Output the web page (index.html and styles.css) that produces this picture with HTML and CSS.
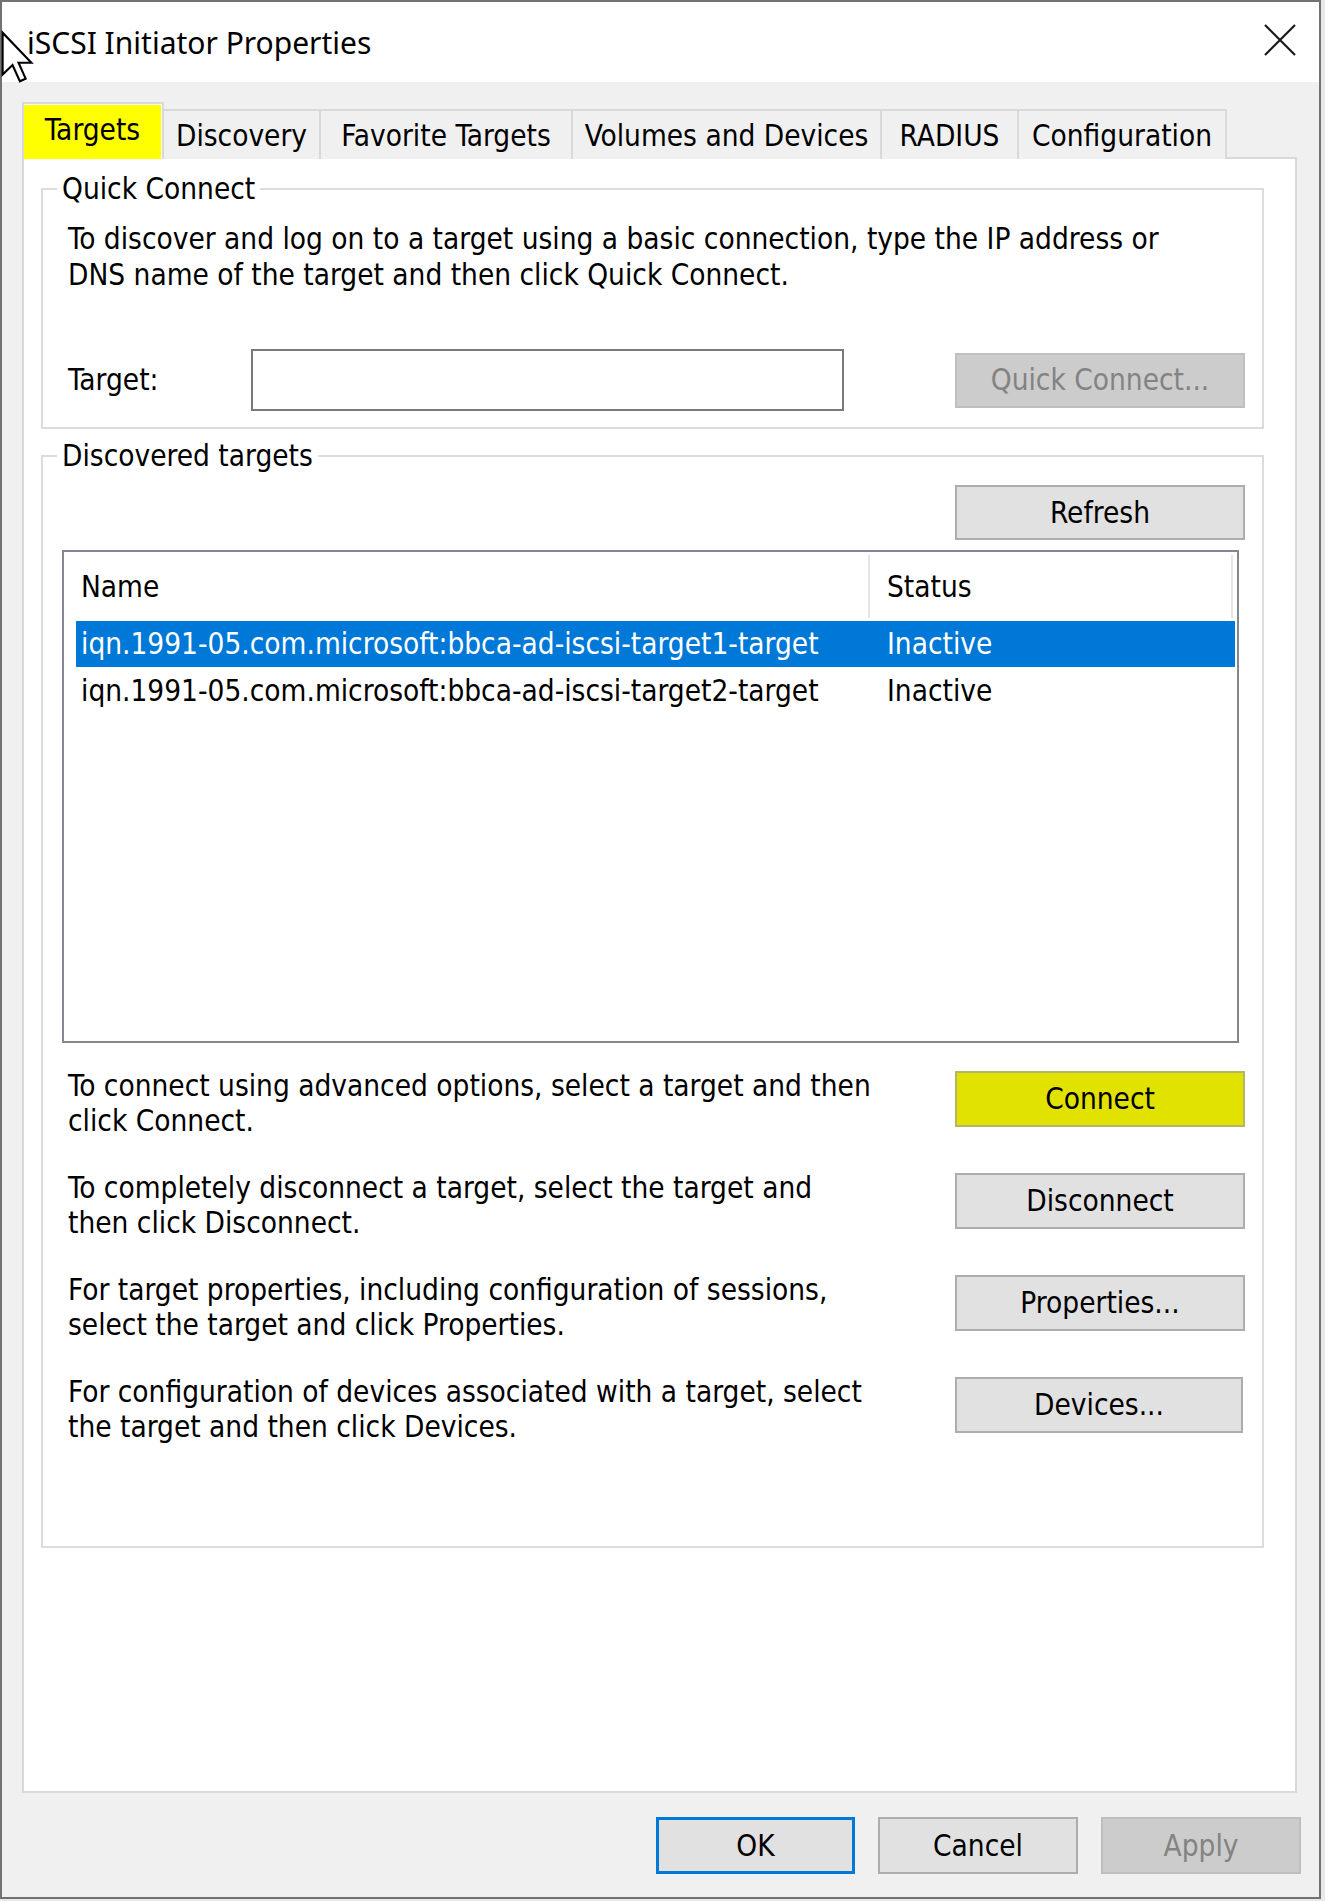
FILE: index.html
```html
<!DOCTYPE html>
<html lang="en">
<head>
    <meta charset="UTF-8">
    <meta name="viewport" content="width=device-width, initial-scale=1.0">
    <title>iSCSI Initiator Properties</title>
    <link rel="stylesheet" href="styles.css">
</head>
<body>
    <div class="window">
        <div class="titlebar">
            <span class="title">iSCSI Initiator Properties</span>
            <button type="button" class="close-btn" aria-label="Close">
                <svg width="32" height="32" viewBox="0 0 32 32">
                    <path d="M1 1 L31 31 M31 1 L1 31" stroke="#1a1a1a" stroke-width="2.2" fill="none"/>
                </svg>
            </button>
        </div>

        <div class="dialog">
            <div class="tabs">
                <div class="tab active"><span class="mark">Targets</span></div>
                <div class="tab tab-discovery">Discovery</div>
                <div class="tab tab-favorite">Favorite Targets</div>
                <div class="tab tab-volumes">Volumes and Devices</div>
                <div class="tab tab-radius">RADIUS</div>
                <div class="tab tab-config">Configuration</div>
            </div>

            <div class="tab-panel">
                <fieldset class="group group-quick">
                    <legend>Quick Connect</legend>
                    <p class="note">To discover and log on to a target using a basic connection, type the IP address or<br>DNS name of the target and then click Quick Connect.</p>
                    <div class="target-row">
                        <label class="target-label" for="target">Target:</label>
                        <input type="text" id="target" class="target-input">
                        <button type="button" class="btn" disabled>Quick Connect...</button>
                    </div>
                </fieldset>

                <fieldset class="group group-discovered">
                    <legend>Discovered targets</legend>
                    <div class="refresh-row">
                        <button type="button" class="btn">Refresh</button>
                    </div>

                    <div class="list">
                        <div class="list-head">
                            <div class="col-name">Name</div>
                            <div class="col-status">Status</div>
                        </div>
                        <div class="list-row selected">
                            <div class="col-name">iqn.1991-05.com.microsoft:bbca-ad-iscsi-target1-target</div>
                            <div class="col-status">Inactive</div>
                        </div>
                        <div class="list-row">
                            <div class="col-name">iqn.1991-05.com.microsoft:bbca-ad-iscsi-target2-target</div>
                            <div class="col-status">Inactive</div>
                        </div>
                    </div>

                    <div class="actions">
                        <div class="action">
                            <p>To connect using advanced options, select a target and then<br>click Connect.</p>
                            <button type="button" class="btn btn-mark">Connect</button>
                        </div>
                        <div class="action">
                            <p>To completely disconnect a target, select the target and<br>then click Disconnect.</p>
                            <button type="button" class="btn">Disconnect</button>
                        </div>
                        <div class="action">
                            <p>For target properties, including configuration of sessions,<br>select the target and click Properties.</p>
                            <button type="button" class="btn">Properties...</button>
                        </div>
                        <div class="action">
                            <p>For configuration of devices associated with a target, select<br>the target and then click Devices.</p>
                            <button type="button" class="btn btn-devices">Devices...</button>
                        </div>
                    </div>
                </fieldset>
            </div>

            <div class="footer">
                <button type="button" class="btn btn-default">OK</button>
                <button type="button" class="btn">Cancel</button>
                <button type="button" class="btn" disabled>Apply</button>
            </div>
        </div>
    </div>

    <svg class="cursor" width="34" height="55" viewBox="0 0 13 21">
        <path d="M1 1 L1 17 L4.8 13.4 L7.6 19.6 L9.8 18.6 L7.1 12.5 L12 12.5 Z" fill="#fff" stroke="#000" stroke-width="0.8" stroke-linejoin="miter"/>
    </svg>
</body>
</html>
```

FILE: styles.css
```css
* {
    box-sizing: border-box;
}
body {
    margin: 0;
    background-color: #e9e9e9;
    font-family: "DejaVu Sans Condensed", "DejaVu Sans", sans-serif;
    font-stretch: condensed;
    font-size: 29.5px;
    color: #000;
}
.window {
    position: relative;
    width: 1321px;
    height: 1899px;
    border: 2px solid #727272;
    background-color: #f0f0f0;
    display: flex;
    flex-direction: column;
}

/* title bar */
.titlebar {
    height: 80px;
    flex-shrink: 0;
    background-color: #fff;
    display: flex;
    align-items: center;
    justify-content: space-between;
    padding: 0 22px 0 25px;
}
.title {
    font-family: "Noto Sans", "Open Sans", sans-serif;
    font-stretch: normal;
    font-size: 30px;
    color: #000;
}
.close-btn {
    border: none;
    background: none;
    padding: 0;
    width: 34px;
    height: 34px;
    margin-top: -4px;
    display: flex;
    align-items: center;
    justify-content: center;
}

.dialog {
    flex: 1;
    padding: 22px 22px 0 20px;
    display: flex;
    flex-direction: column;
}

/* tabs */
.tabs {
    display: flex;
    align-items: flex-end;
    height: 55px;
    position: relative;
    z-index: 1;
    margin-bottom: -2px;
}
.tab {
    height: 50px;
    border: 2px solid #d9d9d9;
    border-bottom: none;
    margin-left: -2px;
    background-color: #f0f0f0;
    display: flex;
    align-items: center;
    justify-content: center;
    padding-top: 2px;
    white-space: nowrap;
}
.tab.active {
    height: 57px;
    width: 142px;
    margin-left: 0;
    background-color: #fff;
    padding: 1px 1px 0 0;
    align-items: stretch;
}
.tab.active .mark {
    flex: 1;
    background-color: #ffff00;
    display: flex;
    align-items: center;
    justify-content: center;
    padding-bottom: 4px;
}
.tab-discovery { width: 159px; }
.tab-favorite { width: 254px; }
.tab-volumes { width: 311px; }
.tab-radius { width: 139px; }
.tab-config { width: 210px; }

.tab-panel {
    height: 1636px;
    background-color: #fff;
    border: 2px solid #d9d9d9;
    padding: 12px 31px 0 17px;
}

/* group boxes */
.group {
    margin: 0;
    border: 2px solid #dcdcdc;
    padding: 14px 17px 16px 25px;
    min-width: 0;
}
.group legend {
    line-height: 36px;
    padding: 0 5px;
    margin-left: -11px;
}
.group-discovered {
    margin-top: 9px;
    padding-top: 11px;
    padding-bottom: 101px;
}
.note {
    margin: 0;
    line-height: 36px;
    white-space: nowrap;
}

.target-row {
    margin-top: 56px;
    height: 62px;
    display: flex;
    align-items: center;
}
.target-label {
    width: 183px;
}
.target-input {
    width: 593px;
    height: 62px;
    border: 2px solid #7a7a7a;
    background-color: #fff;
    outline: none;
}

/* buttons */
.btn {
    width: 290px;
    height: 55px;
    margin-left: auto;
    font-family: inherit;
    font-stretch: inherit;
    font-size: 29.5px;
    color: #000;
    background-color: #e1e1e1;
    border: 2px solid #adadad;
    padding: 0;
}
.btn:disabled {
    background-color: #cccccc;
    border-color: #bfbfbf;
    color: #838383;
}
.btn-mark {
    background-color: #e2e200;
    border-color: #b5b56a;
}
.btn-devices {
    width: 288px;
    margin-right: 2px;
}

.refresh-row {
    display: flex;
}

/* list view */
.list {
    margin: 10px 6px 0 -6px;
    height: 493px;
    border: 2px solid #828790;
    background-color: #fff;
    padding: 0 2px 0 12px;
}
.list-head,
.list-row {
    display: flex;
    white-space: nowrap;
}
.list-head {
    height: 68px;
    align-items: stretch;
}
.list-head .col-name,
.list-head .col-status {
    display: flex;
    align-items: center;
    border-right: 2px solid #e5e5e5;
    margin-top: 3px;
    margin-bottom: 2px;
}
.list-head .col-status {
    margin-right: 2px;
}
.col-name {
    width: 794px;
    padding-left: 5px;
}
.col-status {
    flex: 1;
    padding-left: 17px;
}
.list-row {
    height: 48px;
    line-height: 46px;
}
.list-row.selected {
    background-color: #0078d7;
    color: #fff;
    border-top: 1px solid #fff;
    border-bottom: 1px solid #fff;
}

/* actions */
.actions {
    margin-top: 28px;
    display: flex;
    flex-direction: column;
    gap: 34px;
}
.action {
    display: flex;
    align-items: flex-start;
}
.action p {
    margin: -2px 0 0 0;
    line-height: 35px;
    white-space: nowrap;
}
.action .btn {
    height: 56px;
}

/* footer */
.footer {
    display: flex;
    justify-content: flex-end;
    gap: 23px;
    margin: 24px -4px 0 0;
}
.footer .btn {
    width: 200px;
    height: 57px;
    margin-left: 0;
}
.footer .btn-default {
    width: 199px;
    border: 3px solid #0078d7;
}

.cursor {
    position: absolute;
    top: 30px;
    left: 0;
}
```
